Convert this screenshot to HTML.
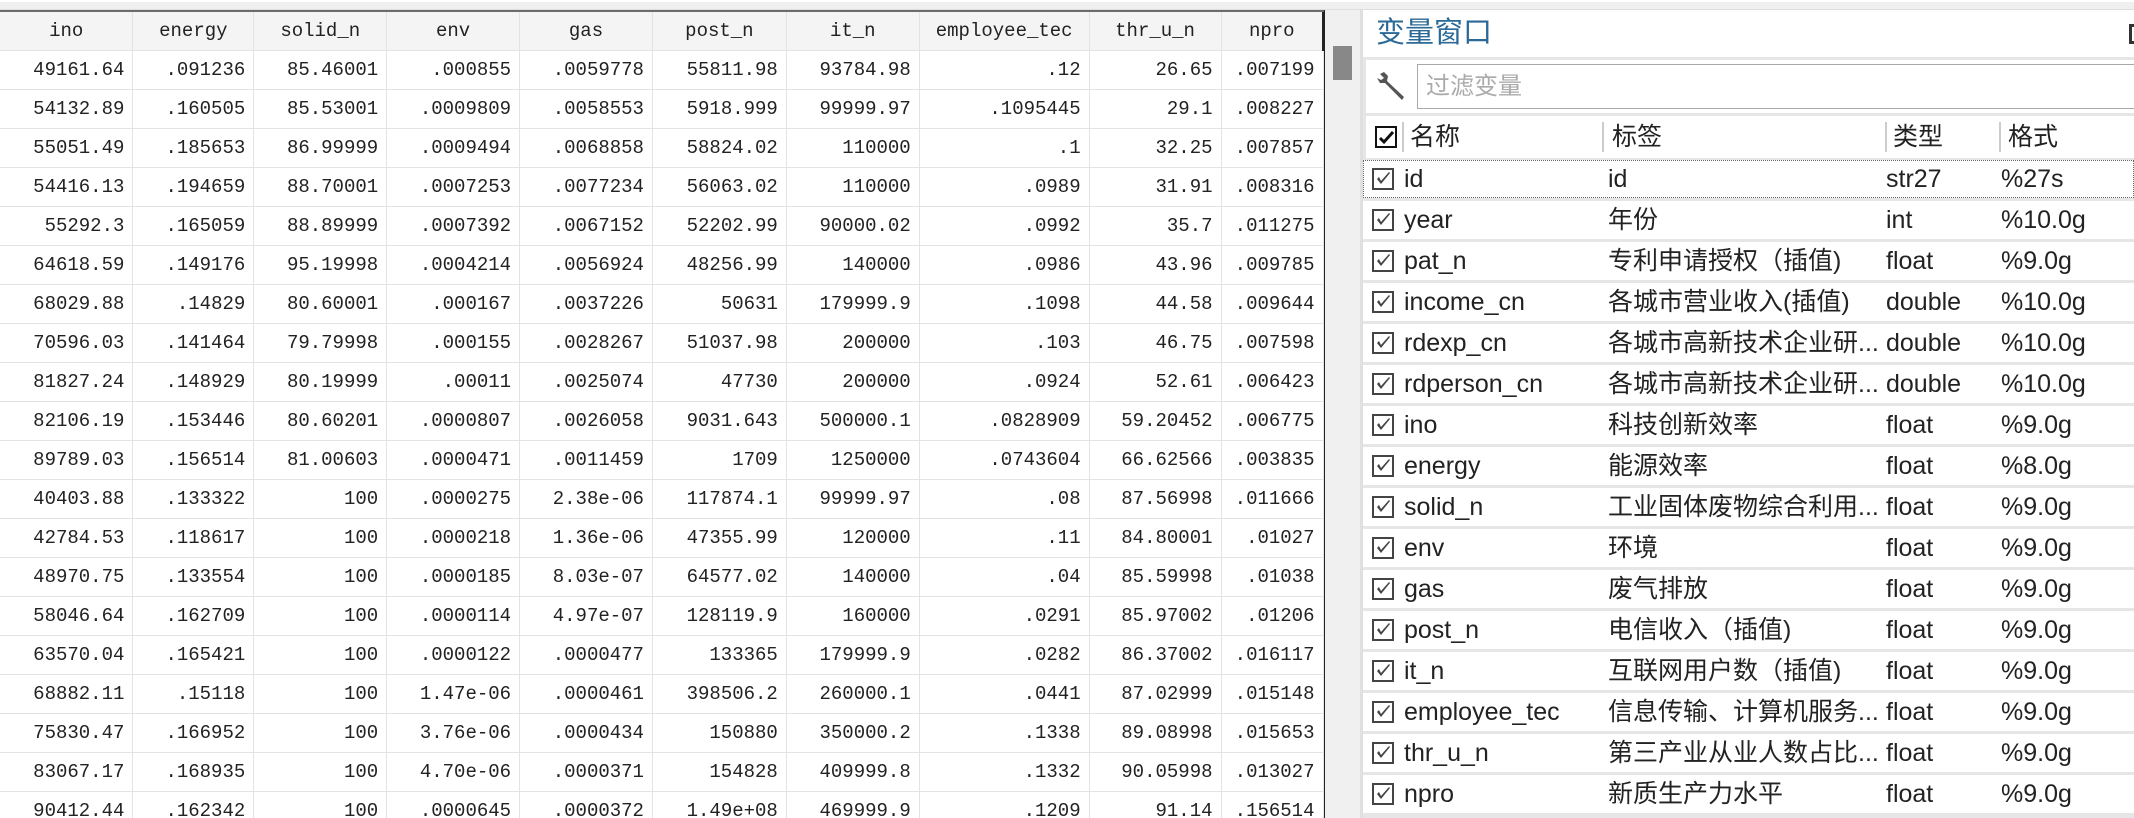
<!DOCTYPE html>
<html><head><meta charset="utf-8"><style>
*{margin:0;padding:0;box-sizing:border-box}
body{width:2134px;height:818px;overflow:hidden;background:#fff;position:relative;font-family:"Liberation Sans","Noto Sans CJK SC",sans-serif}
.topbar{position:absolute;left:0;top:0;width:2134px;height:10px;background:#f0f0f0;border-top:2px solid #fff;border-bottom:1px solid #ddd}
.grid{position:absolute;left:0;top:10px;width:1324px;height:808px;overflow:hidden;border-top:2px solid #6b6b6b}
table{border-collapse:collapse;table-layout:fixed;font-family:"Liberation Mono",monospace;font-size:19px;color:#222}
td,th{height:39px;border-right:1px solid #e3e3e3;border-bottom:1px solid #e3e3e3;white-space:nowrap;overflow:hidden;padding:0 8px 0 0}
th{font-weight:normal;text-align:center;background:#f4f4f4;padding:0;height:38px}
td{text-align:right}
.sb{position:absolute;left:1324px;top:10px;width:36px;height:808px;background:#f0f0f0;border-left:1px solid #222}
.thumb{position:absolute;left:8px;top:36px;width:19px;height:34px;background:#888}
.panel{position:absolute;left:1360px;top:10px;width:774px;height:808px;background:#e6e6e6;border-left:3px solid #e0e0e0}
.title{position:absolute;left:0;top:0;width:774px;height:47px;background:#fff;color:#2b6a96;font-size:29px;padding-left:13px;line-height:47px}
.pin{position:absolute;right:0;top:14px;width:8px;height:20px;border:3px solid #333;border-right:none}
.filter{position:absolute;left:3px;top:50px;width:771px;height:53px;background:#fff}
.inp{position:absolute;left:51px;top:4px;width:730px;height:45px;border:1px solid #aaa;color:#aaa;font-size:24px;line-height:43px;padding-left:8px}
.hdr{position:absolute;left:3px;top:106px;width:771px;height:42px;background:#fff;font-size:25px;color:#222}
.hdr span{position:absolute;top:0;line-height:42px}
.sep{position:absolute;top:6px;width:2px;height:30px;background:#ccc}
.row{position:absolute;left:3px;width:771px;height:38px;background:#fff;font-size:25px;color:#222}
.row span{position:absolute;top:0;line-height:38px;white-space:nowrap}
.cb{position:absolute;left:9px;top:8px;width:22px;height:22px;border:2px solid #444;background:#fff}
.cb svg{position:absolute;left:1px;top:1px}
</style></head><body>
<div class="topbar"></div>
<div class="grid"><table>
<colgroup><col style="width:133px"><col style="width:121px"><col style="width:133px"><col style="width:133px"><col style="width:133px"><col style="width:134px"><col style="width:133px"><col style="width:170px"><col style="width:132px"><col style="width:102px"></colgroup>
<tr><th>ino</th><th>energy</th><th>solid_n</th><th>env</th><th>gas</th><th>post_n</th><th>it_n</th><th>employee_tec</th><th>thr_u_n</th><th style="border-right:2px solid #222">npro</th></tr>
<tr><td>49161.64</td><td>.091236</td><td>85.46001</td><td>.000855</td><td>.0059778</td><td>55811.98</td><td>93784.98</td><td>.12</td><td>26.65</td><td>.007199</td></tr>
<tr><td>54132.89</td><td>.160505</td><td>85.53001</td><td>.0009809</td><td>.0058553</td><td>5918.999</td><td>99999.97</td><td>.1095445</td><td>29.1</td><td>.008227</td></tr>
<tr><td>55051.49</td><td>.185653</td><td>86.99999</td><td>.0009494</td><td>.0068858</td><td>58824.02</td><td>110000</td><td>.1</td><td>32.25</td><td>.007857</td></tr>
<tr><td>54416.13</td><td>.194659</td><td>88.70001</td><td>.0007253</td><td>.0077234</td><td>56063.02</td><td>110000</td><td>.0989</td><td>31.91</td><td>.008316</td></tr>
<tr><td>55292.3</td><td>.165059</td><td>88.89999</td><td>.0007392</td><td>.0067152</td><td>52202.99</td><td>90000.02</td><td>.0992</td><td>35.7</td><td>.011275</td></tr>
<tr><td>64618.59</td><td>.149176</td><td>95.19998</td><td>.0004214</td><td>.0056924</td><td>48256.99</td><td>140000</td><td>.0986</td><td>43.96</td><td>.009785</td></tr>
<tr><td>68029.88</td><td>.14829</td><td>80.60001</td><td>.000167</td><td>.0037226</td><td>50631</td><td>179999.9</td><td>.1098</td><td>44.58</td><td>.009644</td></tr>
<tr><td>70596.03</td><td>.141464</td><td>79.79998</td><td>.000155</td><td>.0028267</td><td>51037.98</td><td>200000</td><td>.103</td><td>46.75</td><td>.007598</td></tr>
<tr><td>81827.24</td><td>.148929</td><td>80.19999</td><td>.00011</td><td>.0025074</td><td>47730</td><td>200000</td><td>.0924</td><td>52.61</td><td>.006423</td></tr>
<tr><td>82106.19</td><td>.153446</td><td>80.60201</td><td>.0000807</td><td>.0026058</td><td>9031.643</td><td>500000.1</td><td>.0828909</td><td>59.20452</td><td>.006775</td></tr>
<tr><td>89789.03</td><td>.156514</td><td>81.00603</td><td>.0000471</td><td>.0011459</td><td>1709</td><td>1250000</td><td>.0743604</td><td>66.62566</td><td>.003835</td></tr>
<tr><td>40403.88</td><td>.133322</td><td>100</td><td>.0000275</td><td>2.38e-06</td><td>117874.1</td><td>99999.97</td><td>.08</td><td>87.56998</td><td>.011666</td></tr>
<tr><td>42784.53</td><td>.118617</td><td>100</td><td>.0000218</td><td>1.36e-06</td><td>47355.99</td><td>120000</td><td>.11</td><td>84.80001</td><td>.01027</td></tr>
<tr><td>48970.75</td><td>.133554</td><td>100</td><td>.0000185</td><td>8.03e-07</td><td>64577.02</td><td>140000</td><td>.04</td><td>85.59998</td><td>.01038</td></tr>
<tr><td>58046.64</td><td>.162709</td><td>100</td><td>.0000114</td><td>4.97e-07</td><td>128119.9</td><td>160000</td><td>.0291</td><td>85.97002</td><td>.01206</td></tr>
<tr><td>63570.04</td><td>.165421</td><td>100</td><td>.0000122</td><td>.0000477</td><td>133365</td><td>179999.9</td><td>.0282</td><td>86.37002</td><td>.016117</td></tr>
<tr><td>68882.11</td><td>.15118</td><td>100</td><td>1.47e-06</td><td>.0000461</td><td>398506.2</td><td>260000.1</td><td>.0441</td><td>87.02999</td><td>.015148</td></tr>
<tr><td>75830.47</td><td>.166952</td><td>100</td><td>3.76e-06</td><td>.0000434</td><td>150880</td><td>350000.2</td><td>.1338</td><td>89.08998</td><td>.015653</td></tr>
<tr><td>83067.17</td><td>.168935</td><td>100</td><td>4.70e-06</td><td>.0000371</td><td>154828</td><td>409999.8</td><td>.1332</td><td>90.05998</td><td>.013027</td></tr>
<tr><td>90412.44</td><td>.162342</td><td>100</td><td>.0000645</td><td>.0000372</td><td>1.49e+08</td><td>469999.9</td><td>.1209</td><td>91.14</td><td>.156514</td></tr>
<tr><td>&nbsp;</td><td></td><td></td><td></td><td></td><td></td><td></td><td></td><td></td><td></td></tr>
</table></div>
<div class="sb"><div class="thumb"></div></div>
<div class="panel">
<div class="title">变量窗口<div class="pin"></div></div>
<div class="filter">
<svg style="position:absolute;left:10px;top:10px" width="32" height="32" viewBox="0 0 32 32"><path d="M4 4 L8 2 L12 6 L11 11 L28 27 L26 30 L9 13 L4 13 L1 8 L5 10 L8 8 Z" fill="#555"/></svg>
<div class="inp">过滤变量</div></div>
<div class="hdr">
<div class="cb" style="left:9px;top:10px;border-color:#111"><svg width="17" height="17" viewBox="0 0 17 17"><path d="M2 9 L6 13 L15 3" stroke="#111" stroke-width="3" fill="none"/></svg></div>
<div class="sep" style="left:36px"></div>
<span style="left:44px">名称</span>
<div class="sep" style="left:236px"></div><span style="left:246px">标签</span>
<div class="sep" style="left:519px"></div><span style="left:527px">类型</span>
<div class="sep" style="left:633px"></div><span style="left:642px">格式</span>
</div>
</div>
<div style="position:absolute;left:1360px;top:10px">
<div class="row" style="top:150px;outline:1px dotted #666;outline-offset:-1px"><div class="cb"><svg width="17" height="17" viewBox="0 0 17 17"><path d="M2 8 L6 13 L15 2 L14 1 L6 10 L4 6 Z" fill="#444"/></svg></div><span style="left:41px">id</span><span style="left:245px">id</span><span style="left:523px">str27</span><span style="left:638px">%27s</span></div>
<div class="row" style="top:191px"><div class="cb"><svg width="17" height="17" viewBox="0 0 17 17"><path d="M2 8 L6 13 L15 2 L14 1 L6 10 L4 6 Z" fill="#444"/></svg></div><span style="left:41px">year</span><span style="left:245px">年份</span><span style="left:523px">int</span><span style="left:638px">%10.0g</span></div>
<div class="row" style="top:232px"><div class="cb"><svg width="17" height="17" viewBox="0 0 17 17"><path d="M2 8 L6 13 L15 2 L14 1 L6 10 L4 6 Z" fill="#444"/></svg></div><span style="left:41px">pat_n</span><span style="left:245px">专利申请授权（插值)</span><span style="left:523px">float</span><span style="left:638px">%9.0g</span></div>
<div class="row" style="top:273px"><div class="cb"><svg width="17" height="17" viewBox="0 0 17 17"><path d="M2 8 L6 13 L15 2 L14 1 L6 10 L4 6 Z" fill="#444"/></svg></div><span style="left:41px">income_cn</span><span style="left:245px">各城市营业收入(插值)</span><span style="left:523px">double</span><span style="left:638px">%10.0g</span></div>
<div class="row" style="top:314px"><div class="cb"><svg width="17" height="17" viewBox="0 0 17 17"><path d="M2 8 L6 13 L15 2 L14 1 L6 10 L4 6 Z" fill="#444"/></svg></div><span style="left:41px">rdexp_cn</span><span style="left:245px">各城市高新技术企业研...</span><span style="left:523px">double</span><span style="left:638px">%10.0g</span></div>
<div class="row" style="top:355px"><div class="cb"><svg width="17" height="17" viewBox="0 0 17 17"><path d="M2 8 L6 13 L15 2 L14 1 L6 10 L4 6 Z" fill="#444"/></svg></div><span style="left:41px">rdperson_cn</span><span style="left:245px">各城市高新技术企业研...</span><span style="left:523px">double</span><span style="left:638px">%10.0g</span></div>
<div class="row" style="top:396px"><div class="cb"><svg width="17" height="17" viewBox="0 0 17 17"><path d="M2 8 L6 13 L15 2 L14 1 L6 10 L4 6 Z" fill="#444"/></svg></div><span style="left:41px">ino</span><span style="left:245px">科技创新效率</span><span style="left:523px">float</span><span style="left:638px">%9.0g</span></div>
<div class="row" style="top:437px"><div class="cb"><svg width="17" height="17" viewBox="0 0 17 17"><path d="M2 8 L6 13 L15 2 L14 1 L6 10 L4 6 Z" fill="#444"/></svg></div><span style="left:41px">energy</span><span style="left:245px">能源效率</span><span style="left:523px">float</span><span style="left:638px">%8.0g</span></div>
<div class="row" style="top:478px"><div class="cb"><svg width="17" height="17" viewBox="0 0 17 17"><path d="M2 8 L6 13 L15 2 L14 1 L6 10 L4 6 Z" fill="#444"/></svg></div><span style="left:41px">solid_n</span><span style="left:245px">工业固体废物综合利用...</span><span style="left:523px">float</span><span style="left:638px">%9.0g</span></div>
<div class="row" style="top:519px"><div class="cb"><svg width="17" height="17" viewBox="0 0 17 17"><path d="M2 8 L6 13 L15 2 L14 1 L6 10 L4 6 Z" fill="#444"/></svg></div><span style="left:41px">env</span><span style="left:245px">环境</span><span style="left:523px">float</span><span style="left:638px">%9.0g</span></div>
<div class="row" style="top:560px"><div class="cb"><svg width="17" height="17" viewBox="0 0 17 17"><path d="M2 8 L6 13 L15 2 L14 1 L6 10 L4 6 Z" fill="#444"/></svg></div><span style="left:41px">gas</span><span style="left:245px">废气排放</span><span style="left:523px">float</span><span style="left:638px">%9.0g</span></div>
<div class="row" style="top:601px"><div class="cb"><svg width="17" height="17" viewBox="0 0 17 17"><path d="M2 8 L6 13 L15 2 L14 1 L6 10 L4 6 Z" fill="#444"/></svg></div><span style="left:41px">post_n</span><span style="left:245px">电信收入（插值)</span><span style="left:523px">float</span><span style="left:638px">%9.0g</span></div>
<div class="row" style="top:642px"><div class="cb"><svg width="17" height="17" viewBox="0 0 17 17"><path d="M2 8 L6 13 L15 2 L14 1 L6 10 L4 6 Z" fill="#444"/></svg></div><span style="left:41px">it_n</span><span style="left:245px">互联网用户数（插值)</span><span style="left:523px">float</span><span style="left:638px">%9.0g</span></div>
<div class="row" style="top:683px"><div class="cb"><svg width="17" height="17" viewBox="0 0 17 17"><path d="M2 8 L6 13 L15 2 L14 1 L6 10 L4 6 Z" fill="#444"/></svg></div><span style="left:41px">employee_tec</span><span style="left:245px">信息传输、计算机服务...</span><span style="left:523px">float</span><span style="left:638px">%9.0g</span></div>
<div class="row" style="top:724px"><div class="cb"><svg width="17" height="17" viewBox="0 0 17 17"><path d="M2 8 L6 13 L15 2 L14 1 L6 10 L4 6 Z" fill="#444"/></svg></div><span style="left:41px">thr_u_n</span><span style="left:245px">第三产业从业人数占比...</span><span style="left:523px">float</span><span style="left:638px">%9.0g</span></div>
<div class="row" style="top:765px"><div class="cb"><svg width="17" height="17" viewBox="0 0 17 17"><path d="M2 8 L6 13 L15 2 L14 1 L6 10 L4 6 Z" fill="#444"/></svg></div><span style="left:41px">npro</span><span style="left:245px">新质生产力水平</span><span style="left:523px">float</span><span style="left:638px">%9.0g</span></div>
</div>
</body></html>
